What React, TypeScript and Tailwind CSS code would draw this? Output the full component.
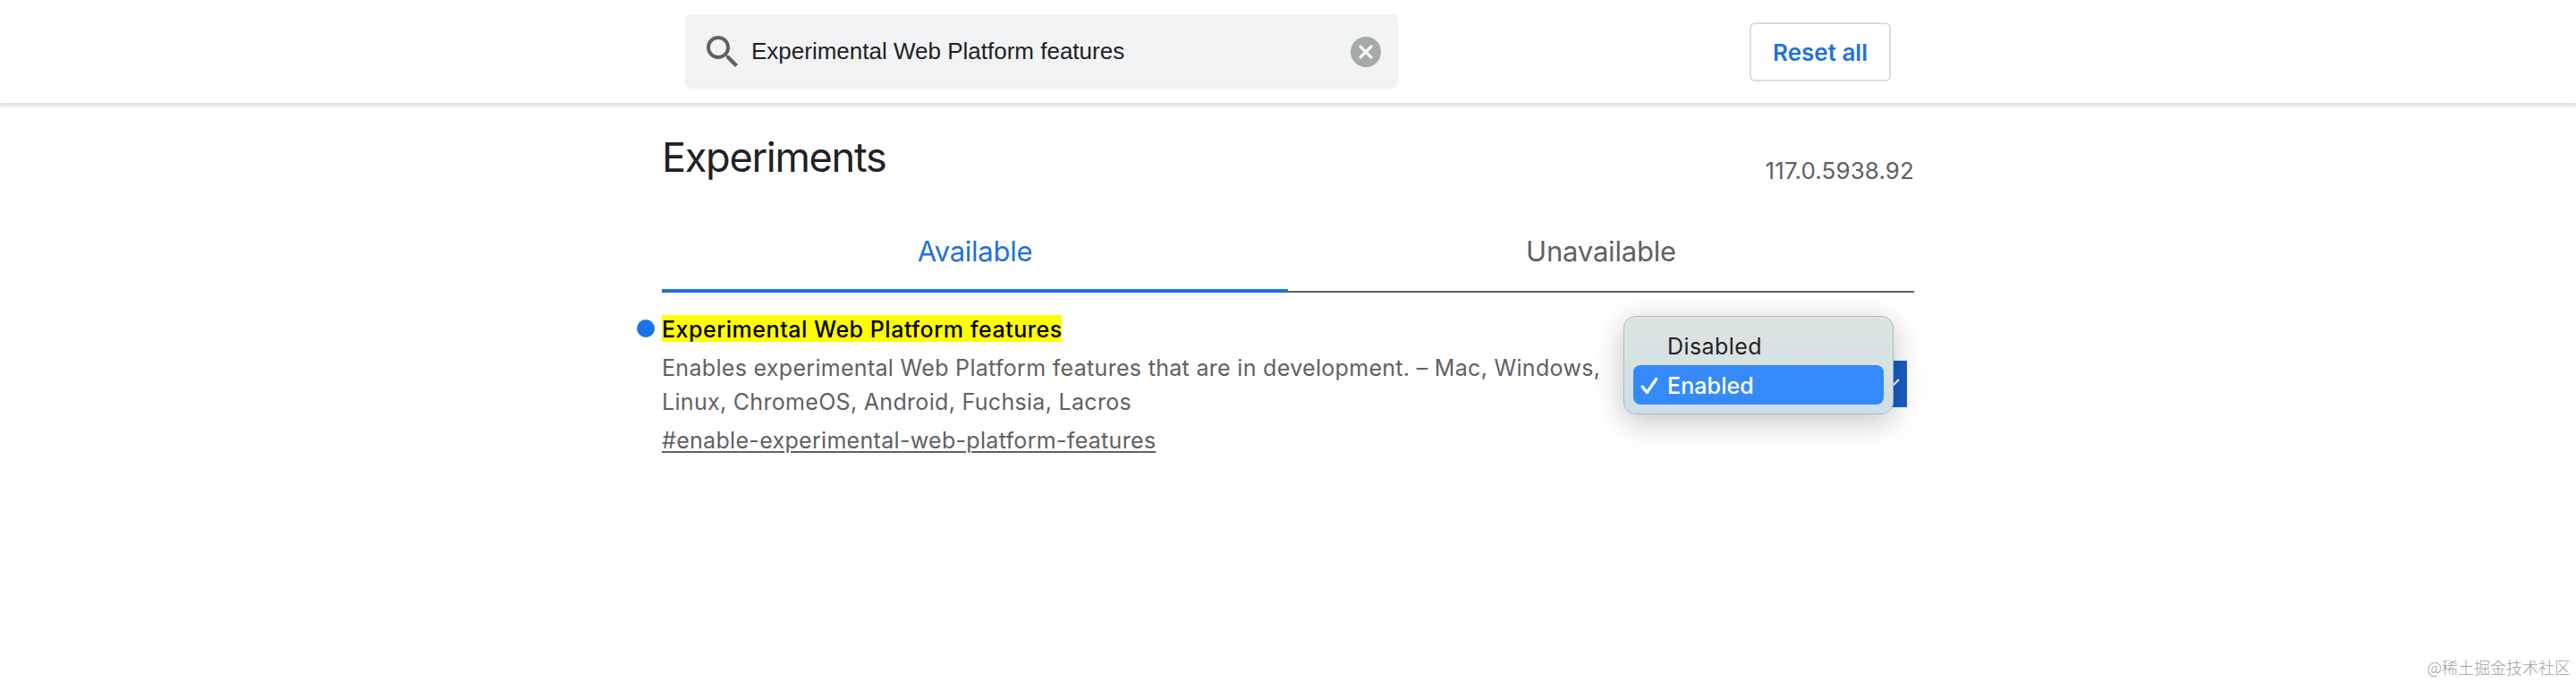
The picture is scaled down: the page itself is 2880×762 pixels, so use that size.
function SearchIcon() {
  return (
    <svg className="size-12 shrink-0" viewBox="0 0 24 24" fill="#5f6163">
      <path d="M15.5 14h-.79l-.28-.27C15.41 12.59 16 11.11 16 9.5 16 5.91 13.09 3 9.5 3S3 5.91 3 9.5 5.91 16 9.5 16c1.61 0 3.09-.59 4.23-1.57l.27.28v.79l5 4.99L20.49 19l-4.99-5zm-6 0C7.01 14 5 11.99 5 9.5S7.01 5 9.5 5 14 7.01 14 9.5 11.99 14 9.5 14z" />
    </svg>
  );
}

function ClearIcon() {
  return (
    <svg className="size-[34px] shrink-0" viewBox="0 0 34 34">
      <circle cx="17" cy="17" r="17" fill="#a5a9a9" />
      <path d="M11 11l12 12M23 11L11 23" stroke="#f4f6f7" strokeWidth="3.2" strokeLinecap="round" />
    </svg>
  );
}

function Header() {
  return (
    <header className="flex h-[115px] shrink-0 bg-white pt-4 pl-[766px] shadow-[0_2px_4px_1px_rgba(0,0,0,0.15)]">
      <div className="flex h-[83px] w-[797px] items-center rounded-[6px] bg-[#f1f3f4] pr-[19px] pl-[18px]">
        <SearchIcon />
        <span className="ml-[8px] flex-1 font-['Liberation_Sans',Arial,sans-serif] text-[26px] text-[#202124]">
          Experimental Web Platform features
        </span>
        <ClearIcon />
      </div>
      <button className="mt-[9px] ml-[393px] h-[66px] w-[158px] rounded-[6px] border-2 border-[#dcdddf] text-[26px] font-semibold text-[#1f71db]">
        Reset all
      </button>
    </header>
  );
}

function OptionMenu() {
  return (
    <div className="absolute top-[-50px] left-0 h-[110px] w-[302px] rounded-[13px] border border-[#b3bbbb] bg-linear-to-b from-[#dde4e2] via-[#d7e2e3] to-[#cbdee8] px-[10px] pt-[10px] text-[25px] shadow-[0_8px_34px_rgba(0,0,0,0.24)]">
      <div className="h-[44px] pl-[38px] leading-[47px] tracking-[0.42px] text-[#1d2322]">Disabled</div>
      <div className="flex h-[44px] w-[280px] rounded-[8px] bg-[#348af9] pl-[8px] font-medium text-white">
        <svg className="mt-[12px] mr-[10px] h-[22px] w-5" viewBox="0 0 20 22" fill="none" stroke="white" strokeWidth="3.3" strokeLinecap="round" strokeLinejoin="round">
          <path d="M2.2 12L7.4 18.6L17.7 3.5" />
        </svg>
        <span className="leading-[47px] tracking-[0.1px]">Enabled</span>
      </div>
    </div>
  );
}

function OptionSelect() {
  return (
    <div className="relative mt-[51px] h-[52px] w-[317px] pl-5">
      <div className="flex h-full items-center justify-end bg-[#185fc6] pr-[8px]">
        <svg className="h-3 w-5" viewBox="0 0 20 12" fill="none" stroke="white" strokeWidth="2.2">
          <path d="M2 2L10 10L19 1" />
        </svg>
      </div>
      <OptionMenu />
    </div>
  );
}

export default function App() {
  return (
    <div className="flex h-[762px] w-[2880px] flex-col overflow-hidden bg-white font-['Inter',sans-serif] text-[#5f6163]">
      <Header />
      <main className="ml-[740px] flex w-[1400px] flex-1 flex-col">
        <div className="flex h-[120px] items-start justify-between pt-[33px]">
          <h1 className="text-[45px] leading-[56px] tracking-[-1.25px] text-[#202124]">Experiments</h1>
          <span className="mt-[23px] text-[26px] leading-10 tracking-[0.1px]">117.0.5938.92</span>
        </div>
        <div className="flex h-[92px] text-center text-[31px] leading-[91px]">
          <div className="w-[700px] border-b-4 border-[#1f71db] tracking-[-0.25px] text-[#1f71db]">Available</div>
          <div className="w-[700px] border-b-2 border-[#5f6163] tracking-[-0.2px]">Unavailable</div>
        </div>
        <div className="flex pt-[25px]">
          <div className="-ml-7 flex w-[1103px] gap-2">
            <span className="mt-[5px] size-5 shrink-0 rounded-full bg-[#1a73e8]" />
            <div className="text-[25px] tracking-[0.31px]">
              <h3 className="h-[40px]">
                <mark className="block h-[30px] w-[447px] bg-[#ffff00] leading-[32px] font-medium tracking-[0.53px] whitespace-nowrap text-black">
                  Experimental Web Platform features
                </mark>
              </h3>
              <p className="leading-[38px] whitespace-nowrap">
                Enables experimental Web Platform features that are in development. – Mac, Windows,
                <br />
                Linux, ChromeOS, Android, Fuchsia, Lacros
              </p>
              <a className="mt-[5px] block leading-[38px] underline decoration-2 underline-offset-[3px]">
                #enable-experimental-web-platform-features
              </a>
            </div>
          </div>
          <OptionSelect />
        </div>
      </main>
      <footer className="flex h-8 justify-end pr-[6px] font-['Noto_Sans_CJK_SC',sans-serif] text-[18px] leading-[30px] font-light text-[#a0a0a0]">
        @稀土掘金技术社区
      </footer>
    </div>
  );
}
